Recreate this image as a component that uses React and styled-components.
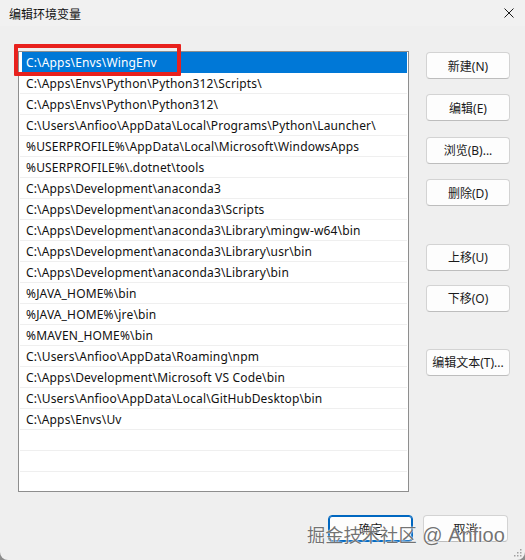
import React from "react";
import styled, { createGlobalStyle } from "styled-components";

const GlobalStyle = createGlobalStyle`
  html, body {
    margin: 0;
    padding: 0;
    background: #8c8c8c;
  }
  body {
    font-family: "Noto Sans", "Noto Sans CJK SC", sans-serif;
    font-size: 12px;
    color: #1a1a1a;
  }
`;

const paths = [
  "C:\\Apps\\Envs\\WingEnv",
  "C:\\Apps\\Envs\\Python\\Python312\\Scripts\\",
  "C:\\Apps\\Envs\\Python\\Python312\\",
  "C:\\Users\\Anfioo\\AppData\\Local\\Programs\\Python\\Launcher\\",
  "%USERPROFILE%\\AppData\\Local\\Microsoft\\WindowsApps",
  "%USERPROFILE%\\.dotnet\\tools",
  "C:\\Apps\\Development\\anaconda3",
  "C:\\Apps\\Development\\anaconda3\\Scripts",
  "C:\\Apps\\Development\\anaconda3\\Library\\mingw-w64\\bin",
  "C:\\Apps\\Development\\anaconda3\\Library\\usr\\bin",
  "C:\\Apps\\Development\\anaconda3\\Library\\bin",
  "%JAVA_HOME%\\bin",
  "%JAVA_HOME%\\jre\\bin",
  "%MAVEN_HOME%\\bin",
  "C:\\Users\\Anfioo\\AppData\\Roaming\\npm",
  "C:\\Apps\\Development\\Microsoft VS Code\\bin",
  "C:\\Users\\Anfioo\\AppData\\Local\\GitHubDesktop\\bin",
  "C:\\Apps\\Envs\\Uv",
  "",
  "",
  "",
];

const sideButtons = [
  { label: "新建(N)", top: 1 },
  { label: "编辑(E)", top: 15.4 },
  { label: "浏览(B)...", top: 15.4 },
  { label: "删除(D)", top: 15.4 },
  { label: "上移(U)", top: 37.4 },
  { label: "下移(O)", top: 14.4 },
  { label: "编辑文本(T)...", top: 37 },
];

const Window = styled.div`
  position: relative;
  width: 525px;
  height: 560px;
  background: #efefef;
  border-radius: 0 0 8px 8px;
  overflow: hidden;
  display: flex;
  flex-direction: column;
`;

const TitleBar = styled.div`
  height: 26px;
  display: flex;
  align-items: center;
  justify-content: space-between;
  padding: 0 11px 0 9px;
  background: #f1f1f1;
`;

const Title = styled.span`
  font-size: 12px;
  color: #111;
  font-family: "Noto Sans CJK SC", sans-serif;
`;

const CloseIcon = styled.svg`
  width: 10px;
  height: 10px;
`;

const Content = styled.div`
  display: flex;
  padding: 25px 15px 0 18px;
  gap: 17px;
`;

const ListBox = styled.div`
  width: 389px;
  height: 439px;
  border: 1px solid #8e8e8e;
  background: #fff;
  overflow: hidden;
  padding: 0 1px;
`;

const Row = styled.div`
  height: 20px;
  line-height: 21px;
  padding-left: 6px;
  white-space: nowrap;
  letter-spacing: 0.16px;
  border-bottom: 1px solid ${(p) => (p.$selected ? "#0078d7" : "#efefef")};
  background: ${(p) =>
    p.$selected
      ? "linear-gradient(to right, #fff 2px, #0078d7 2px)"
      : "transparent"};
  color: ${(p) => (p.$selected ? "#fff" : "#111")};
`;

const SideColumn = styled.div`
  display: flex;
  flex-direction: column;
  width: 84px;
`;

const Button = styled.button`
  height: 27px;
  width: ${(p) => p.$width || 84}px;
  margin-top: ${(p) => p.$top || 0}px;
  padding: 0;
  background: #fdfdfd;
  border: 1px solid #d3d3d3;
  border-bottom-color: #bdbdbd;
  border-radius: 4px;
  font-family: "Noto Sans", "Noto Sans CJK SC", sans-serif;
  font-size: 12px;
  color: #1a1a1a;
  box-sizing: border-box;
  ${(p) =>
    p.$primary &&
    `
    border: 1px solid #0067c0;
    box-shadow: inset 0 0 0 1px #0067c0;
    `}
`;

const Footer = styled.div`
  display: flex;
  justify-content: flex-end;
  gap: 10px;
  padding: 23px 17px 0 0;
`;

const Highlight = styled.div`
  position: absolute;
  left: 14px;
  top: 44px;
  width: 159px;
  height: 24px;
  border: 4px solid #e8211d;
  border-radius: 1px;
`;

const Watermark = styled.div`
  position: absolute;
  left: 307px;
  top: 520px;
  font-family: "Liberation Sans", "Noto Sans CJK SC", sans-serif;
  font-size: 20px;
  line-height: 28px;
  color: rgba(90, 90, 90, 0.85);
  white-space: nowrap;
  text-shadow: 0 0 2px #fff, 0 0 1px #fff;
`;

const WatermarkCjk = styled.span`
  font-family: "Noto Sans CJK SC", sans-serif;
  font-size: 18.3px;
`;

const Grip = styled.svg`
  position: absolute;
  right: 3px;
  bottom: 3px;
  width: 8px;
  height: 8px;
`;

export default function App() {
  return (
    <>
      <GlobalStyle />
      <Window>
        <TitleBar>
          <Title>编辑环境变量</Title>
          <CloseIcon viewBox="0 0 10 10">
            <path d="M0.5 0.5 L9.5 9.5 M9.5 0.5 L0.5 9.5" stroke="#1b1b1b" strokeWidth="1" />
          </CloseIcon>
        </TitleBar>
        <Content>
          <ListBox>
            {paths.map((p, i) => (
              <Row key={i} $selected={i === 0}>
                {p}
              </Row>
            ))}
          </ListBox>
          <SideColumn>
            {sideButtons.map((b) => (
              <Button key={b.label} $top={b.top}>
                {b.label}
              </Button>
            ))}
          </SideColumn>
        </Content>
        <Footer>
          <Button $primary $width={85}>确定</Button>
          <Button $width={85}>取消</Button>
        </Footer>
        <Highlight />
        <Watermark>
          <WatermarkCjk>掘金技术社区</WatermarkCjk> @ Anfioo
        </Watermark>
        <Grip viewBox="0 0 8 8">
          <rect x="6" y="0" width="1.5" height="1.5" fill="#a0a0a0" />
          <rect x="3" y="3" width="1.5" height="1.5" fill="#a0a0a0" />
          <rect x="6" y="3" width="1.5" height="1.5" fill="#a0a0a0" />
          <rect x="0" y="6" width="1.5" height="1.5" fill="#a0a0a0" />
          <rect x="3" y="6" width="1.5" height="1.5" fill="#a0a0a0" />
          <rect x="6" y="6" width="1.5" height="1.5" fill="#a0a0a0" />
        </Grip>
      </Window>
    </>
  );
}
